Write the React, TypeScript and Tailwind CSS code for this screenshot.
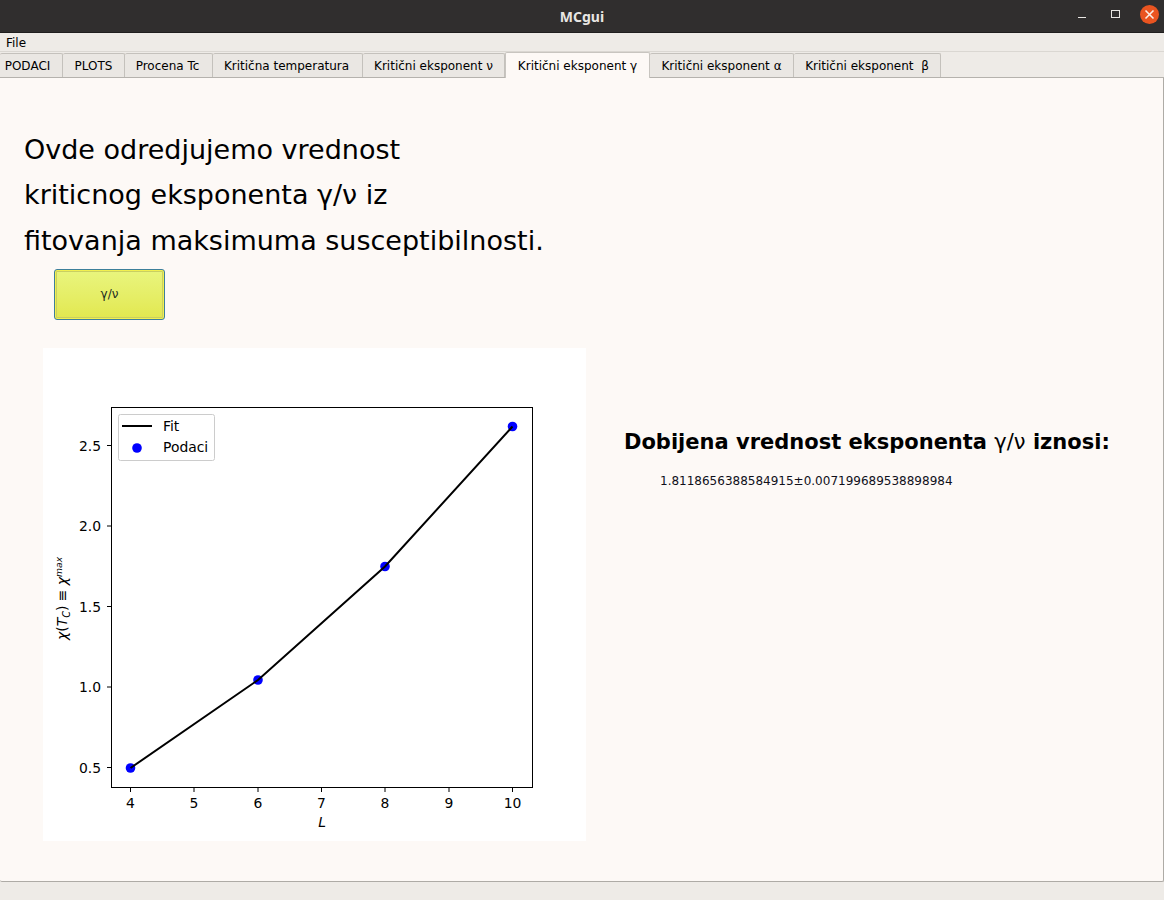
import React from "react";

const tabs = [
  { label: "PODACI", w: "w-[63px] pr-[7px]" },
  { label: "PLOTS", w: "w-[62px]" },
  { label: "Procena Tc", w: "w-[88px] pr-[2px]" },
  { label: "Kritična temperatura", w: "w-[150px] pr-[2px]" },
  { label: "Kritični eksponent ν", w: "w-[142px]" },
  { label: "Kritični eksponent γ", w: "w-[145px]", active: true },
  { label: "Kritični eksponent α", w: "w-[144px]" },
  { label: "Kritični eksponent  β", w: "w-[147px]" },
];

const xTicks = [
  { v: "4", x: 130.5 },
  { v: "5", x: 194 },
  { v: "6", x: 258 },
  { v: "7", x: 321.5 },
  { v: "8", x: 385 },
  { v: "9", x: 449 },
  { v: "10", x: 512.5 },
];

const yTicks = [
  { v: "0.5", y: 767.5 },
  { v: "1.0", y: 687 },
  { v: "1.5", y: 606.5 },
  { v: "2.0", y: 526 },
  { v: "2.5", y: 445.5 },
];

const points = [
  [130.5, 768],
  [258, 680],
  [385, 566.5],
  [512.5, 426.5],
];

function Chart() {
  return (
    <svg width="543" height="493" viewBox="43 348 543 493" className="block bg-white" fontFamily="'DejaVu Sans', sans-serif" fontSize="13.9" fill="#000">
      <rect x="111.5" y="407.5" width="421" height="380" fill="#fff" stroke="#000" strokeWidth="1" />
      {xTicks.map((t) => (
        <g key={t.v}>
          <line x1={t.x} x2={t.x} y1="788" y2="792" stroke="#000" />
          <text x={t.x} y="808" textAnchor="middle">{t.v}</text>
        </g>
      ))}
      {yTicks.map((t) => (
        <g key={t.v}>
          <line x1="107" x2="111" y1={t.y} y2={t.y} stroke="#000" />
          <text x="101" y={t.y + 5} textAnchor="end">{t.v}</text>
        </g>
      ))}
      {points.map((p) => (
        <circle key={p[0]} cx={p[0]} cy={p[1]} r="4.8" fill="#0000ff" />
      ))}
      <polyline points={points.map((p) => p.join(",")).join(" ")} fill="none" stroke="#000" strokeWidth="2" />
      <text x="322" y="827" textAnchor="middle" fontStyle="italic">L</text>
      <text transform="translate(67 640) rotate(-90)" fontSize="13.9">
        <tspan fontStyle="italic">χ</tspan>(<tspan fontStyle="italic">T</tspan>
        <tspan fontStyle="italic" fontSize="9.7" dy="3">C</tspan>
        <tspan dy="-3">) ≡ </tspan>
        <tspan fontStyle="italic">χ</tspan>
        <tspan fontStyle="italic" fontSize="9.2" dy="-5">max</tspan>
      </text>
      <rect x="118.5" y="414.5" width="96" height="46" rx="2" fill="#fff" stroke="#ccc" />
      <line x1="122" x2="152" y1="426" y2="426" stroke="#000" strokeWidth="2" />
      <circle cx="137" cy="448" r="4.8" fill="#0000ff" />
      <text x="163" y="431">Fit</text>
      <text x="163" y="452">Podaci</text>
    </svg>
  );
}

export default function App() {
  return (
    <div className="w-[1164px] h-[900px] flex flex-col overflow-hidden bg-[#eeebe7] text-black font-['DejaVu_Sans',sans-serif]">
      <div className="h-[33px] shrink-0 bg-[#302e2e] flex items-center relative border-b border-[#1f1e1e]">
        <span className="w-full text-center text-[14px] font-bold text-[#e8e6e3] font-['Noto_Sans',sans-serif]">MCgui</span>
        <div className="absolute right-0 top-0 h-[32px] flex items-center">
          <div className="w-[8px] h-[1px] mt-[2px] bg-[#e8e6e3] mr-[25px]" />
          <div className="w-[9px] h-[8px] mb-[4px] border border-[#e8e6e3] mr-[20px]" />
          <div className="w-[19px] h-[19px] mb-[3px] rounded-full bg-[#e95420] flex items-center justify-center mr-[5px]">
            <svg width="11" height="11" viewBox="0 0 11 11">
              <path d="M1.5 1.5 L9.5 9.5 M9.5 1.5 L1.5 9.5" stroke="#fbeee6" strokeWidth="1.6" />
            </svg>
          </div>
        </div>
      </div>

      <div className="h-[19px] shrink-0 flex items-center pl-[6px] pt-[1px] border-b border-[#dad7d2] text-[12px]">File</div>

      <div className="h-[26px] shrink-0 flex items-end border-b border-[#b5b2ad] text-[12px] relative z-10">
        {tabs.map((tab) =>
          tab.active ? (
            <div key={tab.label} className={`${tab.w} h-[26px] -mb-px bg-[#fdf9f6] border-x border-t border-[#c8c5c0] rounded-t-[2px] flex items-center justify-center whitespace-pre`}>
              {tab.label}
            </div>
          ) : (
            <div key={tab.label} className={`${tab.w} h-[24px] pt-[1px] bg-[#eae7e3] border-r border-t border-[#c4c1bc] rounded-t-[2px] flex items-center justify-center whitespace-pre`}>
              {tab.label}
            </div>
          )
        )}
      </div>

      <div className="h-[804px] shrink-0 bg-[#fdf9f6] border-r border-b border-[#aeaba6] rounded-b-[2px] flex flex-col">
        <div className="pl-[24px] pt-[48.7px] text-[27px] leading-[45.5px] text-black">
          <p>Ovde odredjujemo vrednost</p>
          <p>kriticnog eksponenta γ/ν iz</p>
          <p>fitovanja maksimuma susceptibilnosti.</p>
        </div>

        <div className="pl-[54px] mt-[5.8px]">
          <button className="w-[111px] h-[51px] rounded-[3px] border border-[#3d7f9a] bg-gradient-to-b from-[#e9f57e] to-[#e2e84e] shadow-[inset_0_0_0_1px_#f2f04e,inset_0_0_0_2px_#c9cf62] text-[12px] text-[#1c2a20]">
            γ/ν
          </button>
        </div>

        <div className="flex pl-[43px] mt-[28px]">
          <Chart />
          <div className="pl-[38px] pt-[80px]">
            <h2 className="text-[21px] leading-[28px] font-bold whitespace-nowrap">
              Dobijena vrednost eksponenta <span className="font-normal">γ/ν</span> iznosi:
            </h2>
            <p className="pl-[36px] mt-[17px] text-[12px] leading-[16px] text-[#10101a]">1.8118656388584915±0.007199689538898984</p>
          </div>
        </div>
      </div>
    </div>
  );
}
